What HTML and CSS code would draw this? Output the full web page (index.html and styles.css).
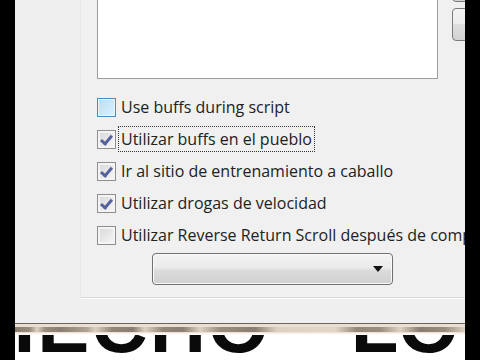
FILE: index.html
```html
<!DOCTYPE html>
<html>
<head>
<meta charset="utf-8">
<link rel="stylesheet" href="styles.css">
</head>
<body>
<div class="frame">
  <div class="window">
    <div class="panel">
      <div class="top-row">
        <div class="listbox"></div>
        <div class="side-buttons">
          <div class="side-btn"></div>
          <div class="side-btn"></div>
        </div>
      </div>
      <div class="options">
        <div class="row"><span class="cb hover"></span><span class="label">Use buffs during script</span></div>
        <div class="row"><span class="cb checked"></span><span class="label focus">Utilizar buffs en el pueblo</span></div>
        <div class="row"><span class="cb checked"></span><span class="label">Ir al sitio de entrenamiento a caballo</span></div>
        <div class="row"><span class="cb checked"></span><span class="label">Utilizar drogas de velocidad</span></div>
        <div class="row"><span class="cb"></span><span class="label">Utilizar Reverse Return Scroll después de compras</span></div>
      </div>
      <div class="combo"><span class="arrow"></span></div>
    </div>
  </div>
  <div class="band"></div>
  <div class="caption"><span class="big">HECHO</span><span class="big second">LO</span></div>
</div>
</body>
</html>
```
FILE: styles.css
```css
html, body {
  margin: 0;
  padding: 0;
  background: #000;
  width: 480px;
  height: 360px;
  overflow: hidden;
}
.frame {
  margin: 0 15px;
  width: 450px;
  display: flex;
  flex-direction: column;
}
.window {
  height: 323px;
  background: #efefef;
  overflow: hidden;
  font-family: "Open Sans", "Noto Sans", sans-serif;
  font-size: 16px;
  color: #222;
}
.panel {
  margin-left: 65px;
  height: 297px;
  border-left: 1px solid #e8e8e8;
  border-bottom: 1px solid #d8d8d8;
  box-shadow: 0 1px 0 #fbfbfb;
  background: #f0f0f0;
  padding-left: 16px;
  display: flex;
  flex-direction: column;
}
.top-row {
  display: flex;
  height: 79px;
}
.listbox {
  flex: none;
  width: 339px;
  margin-top: -3px;
  height: 80px;
  background: #fff;
  border: 1px solid #9c9c9c;
}
.side-buttons {
  flex: none;
  margin-left: 14px;
  display: flex;
  flex-direction: column;
  gap: 6px;
  margin-top: -31px;
}
.side-btn {
  width: 24px;
  height: 31px;
  border: 1px solid #7a7a7a;
  border-radius: 4px;
  background: linear-gradient(#f4f4f4, #ececec 50%, #dedede 50%, #d2d2d2);
}
.options {
  margin-top: 12px;
  display: flex;
  flex-direction: column;
}
.row {
  height: 32px;
  display: flex;
  align-items: center;
  white-space: nowrap;
}
.cb {
  flex: none;
  width: 17px;
  height: 17px;
  border: 1px solid #8f8f8f;
  background: linear-gradient(135deg, #d6d6d6, #f8f8f8);
  box-shadow: inset 0 0 0 2px #f4f4f4;
  margin-right: 5px;
  position: relative;
}
.cb.hover {
  border-color: #4d8cc0;
  background: linear-gradient(135deg, #b7def6, #def1fc);
  box-shadow: inset 0 0 0 1px #e8f5fd;
}
.cb.checked::after {
  content: "";
  position: absolute;
  left: 5px;
  top: 2px;
  width: 4px;
  height: 9px;
  border: solid #55619f;
  border-width: 0 3px 3px 0;
  transform: rotate(40deg);
}
.label {
  line-height: 20px;
}
.label.focus {
  outline: 1px dotted #333;
  outline-offset: 2px;
}
.combo {
  flex: none;
  margin-top: 2px;
  margin-left: 55px;
  width: 230px;
  height: 30px;
  border: 1px solid #707070;
  border-radius: 4px;
  background: linear-gradient(#f3f3f3, #ebebeb 45%, #dcdcdc 55%, #d0d0d0);
  box-shadow: inset 0 0 0 1px #fafafa;
  display: flex;
  align-items: center;
  justify-content: flex-end;
  padding-right: 9px;
}
.arrow {
  width: 0;
  height: 0;
  border-left: 5px solid transparent;
  border-right: 5px solid transparent;
  border-top: 6px solid #111;
}
.band {
  height: 12px;
  background:
    linear-gradient(90deg,
      #8a7e72 0, #9a8e80 15px, #ddd1c2 22px, #9a8e80 30px, #8a7e72 45px, #b0a394 72px, #ddd1c2 80px,
      #93877a 97px, #8a7e72 118px, #ddd1c2 130px, #93877a 148px, #8a7e72 168px, #ddd1c2 185px,
      #9a8e80 205px, #8a7e72 240px, #ddd1c2 262px, #e2d7c9 320px, #93877a 342px, #9a8e80 365px,
      #ddd1c2 385px, #8a7e72 405px, #9a8e80 430px, #ddd1c2 450px) 0 4px / 100% 5px no-repeat,
    linear-gradient(#6e6359 0, #6e6359 1px, #eadfd2 1px, #eadfd2 4px, #d8cbbb 6px, #e0d5c7 9px, #f6f0ea 10px, #ffffff 12px);
}
.caption {
  height: 25px;
  background: #fff;
  overflow: hidden;
  display: flex;
  white-space: nowrap;
}
.big {
  font-family: "Liberation Sans", Arial, sans-serif;
  font-weight: bold;
  font-size: 78px;
  line-height: 78px;
  margin-top: -49px;
  color: #0a0a0a;
  flex: none;
}
.big:first-child {
  margin-left: -36px;
  letter-spacing: 2px;
}
.second {
  margin-left: 80px;
}
```
